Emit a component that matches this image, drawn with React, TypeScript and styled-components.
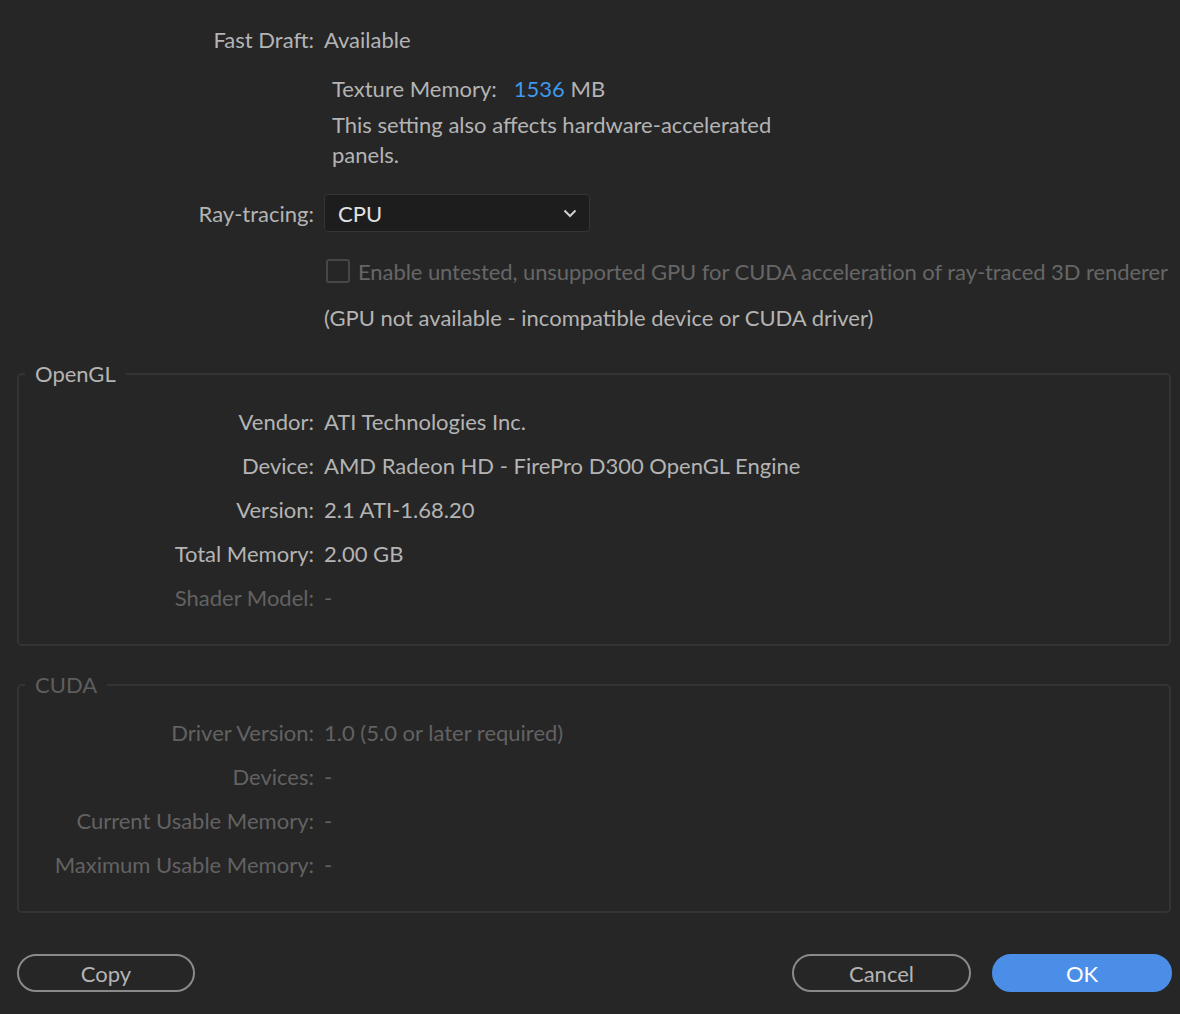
import React from "react";
import styled, { createGlobalStyle } from "styled-components";

const Global = createGlobalStyle`
  html, body {
    margin: 0;
    padding: 0;
    background: #262626;
  }
  body {
    font-family: Lato, "Open Sans", sans-serif;
    color: #b4b4b4;
  }
`;

const Page = styled.div`
  width: 1180px;
  height: 1014px;
  background: #262626;
  display: flex;
  flex-direction: column;
  font-size: 22px;
  box-sizing: border-box;
  padding-top: 17px;
`;

const Row = styled.div<{ $labelWidth: number; $mt?: number }>`
  display: grid;
  grid-template-columns: ${(p) => p.$labelWidth}px 1fr;
  column-gap: 10px;
  align-items: center;
  height: 44px;
  margin-top: ${(p) => p.$mt ?? 0}px;
`;

const Label = styled.div<{ $disabled?: boolean }>`
  text-align: right;
  white-space: nowrap;
  color: ${(p) => (p.$disabled ? "#626262" : "#b4b4b4")};
`;

const Value = styled.div<{ $disabled?: boolean }>`
  white-space: nowrap;
  color: ${(p) => (p.$disabled ? "#626262" : "#b4b4b4")};
`;

const Indented = styled.div`
  margin-left: 332px;
  width: 460px;
  line-height: 30px;
`;

const TextureLine = styled.div`
  margin-top: 13px;
  height: 30px;
  line-height: 30px;
`;

const Note = styled.div`
  margin-top: 6px;
  line-height: 30px;
`;

const Blue = styled.span`
  color: #3f98ee;
  margin-left: 17px;
`;

const Select = styled.div`
  width: 266px;
  height: 38px;
  box-sizing: border-box;
  background: #1d1d1d;
  border: 1px solid #353535;
  border-radius: 4px;
  display: flex;
  align-items: center;
  justify-content: space-between;
  padding: 0 12px 0 13px;
  color: #e2e2e2;
`;

const CheckRow = styled.label`
  display: flex;
  align-items: center;
  gap: 8px;
  color: #666666;
  white-space: nowrap;
  margin-left: 2px;
  letter-spacing: -0.07px;
`;

const Box = styled.span`
  width: 24px;
  height: 24px;
  box-sizing: border-box;
  border: 2px solid #474747;
  border-radius: 3px;
  flex: none;
`;

const Group = styled.fieldset<{ $mt: number }>`
  margin: ${(p) => p.$mt}px 9px 0 17px;
  padding: 10px 0 25px 0;
  border: 2px solid #343434;
  border-radius: 5px;
  min-width: 0;
`;

const Legend = styled.legend<{ $disabled?: boolean }>`
  margin-left: 6px;
  padding: 0 10px;
  line-height: 30px;
  font-size: 22px;
  color: ${(p) => (p.$disabled ? "#5e5e5e" : "#b4b4b4")};
`;

const Footer = styled.div`
  display: flex;
  align-items: center;
  margin: 41px 8px 0 17px;
  gap: 21px;
`;

const Spacer = styled.div`
  flex: 1;
`;

const Button = styled.button<{ $primary?: boolean; $w: number }>`
  width: ${(p) => p.$w}px;
  height: 38px;
  border-radius: 19px;
  box-sizing: border-box;
  font-family: Lato, "Open Sans", sans-serif;
  font-size: 22px;
  padding: 0;
  border: 2px solid ${(p) => (p.$primary ? "#4b8ee7" : "#8a8a8a")};
  background: ${(p) => (p.$primary ? "#4b8ee7" : "transparent")};
  color: ${(p) => (p.$primary ? "#ffffff" : "#b4b4b4")};
`;

const Chevron = () => (
  <svg width="14" height="9" viewBox="0 0 14 9">
    <path d="M1.5 1.5 L7 7 L12.5 1.5" fill="none" stroke="#d0d0d0" strokeWidth="2" />
  </svg>
);

type Item = { label: string; value: string; disabled?: boolean };

const openGL: Item[] = [
  { label: "Vendor:", value: "ATI Technologies Inc." },
  { label: "Device:", value: "AMD Radeon HD - FirePro D300 OpenGL Engine" },
  { label: "Version:", value: "2.1 ATI-1.68.20" },
  { label: "Total Memory:", value: "2.00 GB" },
  { label: "Shader Model:", value: "-", disabled: true },
];

const cuda: Item[] = [
  { label: "Driver Version:", value: "1.0 (5.0 or later required)", disabled: true },
  { label: "Devices:", value: "-", disabled: true },
  { label: "Current Usable Memory:", value: "-", disabled: true },
  { label: "Maximum Usable Memory:", value: "-", disabled: true },
];

export default function App() {
  return (
    <>
      <Global />
      <Page>
        <Row $labelWidth={314}>
          <Label>Fast Draft:</Label>
          <Value>Available</Value>
        </Row>
        <Indented>
          <TextureLine>
            Texture Memory:<Blue>1536</Blue> MB
          </TextureLine>
          <Note>This setting also affects hardware-accelerated panels.</Note>
        </Indented>
        <Row $labelWidth={314} $mt={21}>
          <Label>Ray-tracing:</Label>
          <Select>
            <span>CPU</span>
            <Chevron />
          </Select>
        </Row>
        <Row $labelWidth={314} $mt={14}>
          <span />
          <CheckRow>
            <Box />
            Enable untested, unsupported GPU for CUDA acceleration of ray-traced 3D renderer
          </CheckRow>
        </Row>
        <Row $labelWidth={314} $mt={2}>
          <span />
          <Value>(GPU not available - incompatible device or CUDA driver)</Value>
        </Row>
        <Group $mt={20}>
          <Legend>OpenGL</Legend>
          {openGL.map((it) => (
            <Row key={it.label} $labelWidth={295}>
              <Label $disabled={it.disabled}>{it.label}</Label>
              <Value $disabled={it.disabled}>{it.value}</Value>
            </Row>
          ))}
        </Group>
        <Group $mt={24}>
          <Legend $disabled>CUDA</Legend>
          {cuda.map((it) => (
            <Row key={it.label} $labelWidth={295}>
              <Label $disabled={it.disabled}>{it.label}</Label>
              <Value $disabled={it.disabled}>{it.value}</Value>
            </Row>
          ))}
        </Group>
        <Footer>
          <Button $w={178}>Copy</Button>
          <Spacer />
          <Button $w={179}>Cancel</Button>
          <Button $w={180} $primary>
            OK
          </Button>
        </Footer>
      </Page>
    </>
  );
}
